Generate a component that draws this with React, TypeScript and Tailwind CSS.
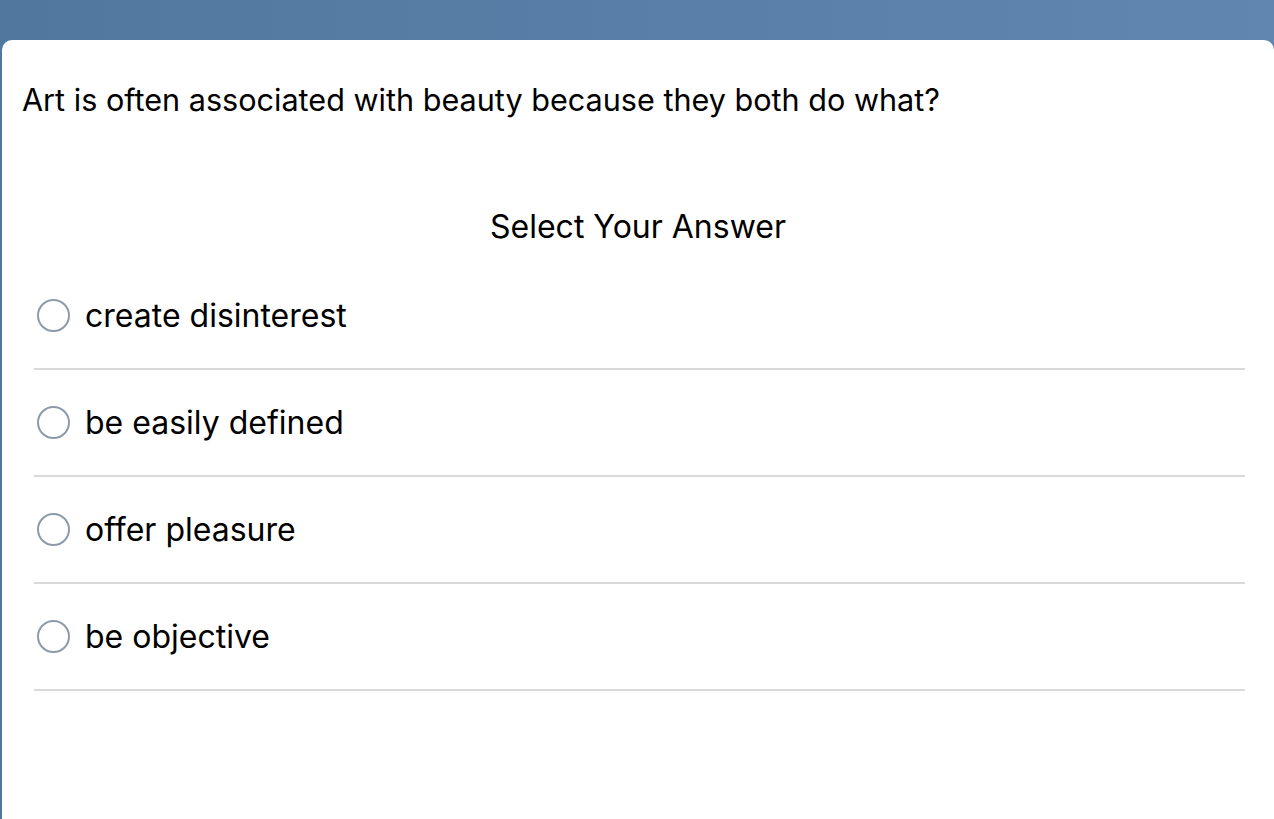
import React from 'react';

const options = ['create disinterest', 'be easily defined', 'offer pleasure', 'be objective'];

const App: React.FC = () => {
  return (
    <div
      className="min-h-screen bg-gradient-to-r from-[#52779f] to-[#5f87b0] pt-[40px] pl-[2px]"
      style={{ fontFamily: 'Inter, "Liberation Sans", Arial, sans-serif' }}
    >
      <div className="bg-white rounded-t-[10px] h-[779px] overflow-hidden">
        {/* Question */}
        <div className="pt-[43px] pl-[20px] text-[30.6px] leading-[34px] text-black">
          Art is often associated with beauty because they both do what?
        </div>

        <div className="mt-[93px] text-center text-[32px] leading-[34px] text-black">Select Your Answer</div>

        {/* Answers */}
        <div className="mt-[19px] pl-[32px] pr-[29px]">
          {options.map((opt) => (
            <div key={opt}>
              <div className="h-[105px] flex items-center">
                <span className="ml-[3px] w-[33px] h-[33px] rounded-full border-2 border-[#8c9aa9] shrink-0" />
                <span className="ml-[15px] text-[32px] leading-[34px] text-black">{opt}</span>
              </div>
              <div className="h-[2px] bg-[#dadada]" />
            </div>
          ))}
        </div>
      </div>
    </div>
  );
};

export default App;
